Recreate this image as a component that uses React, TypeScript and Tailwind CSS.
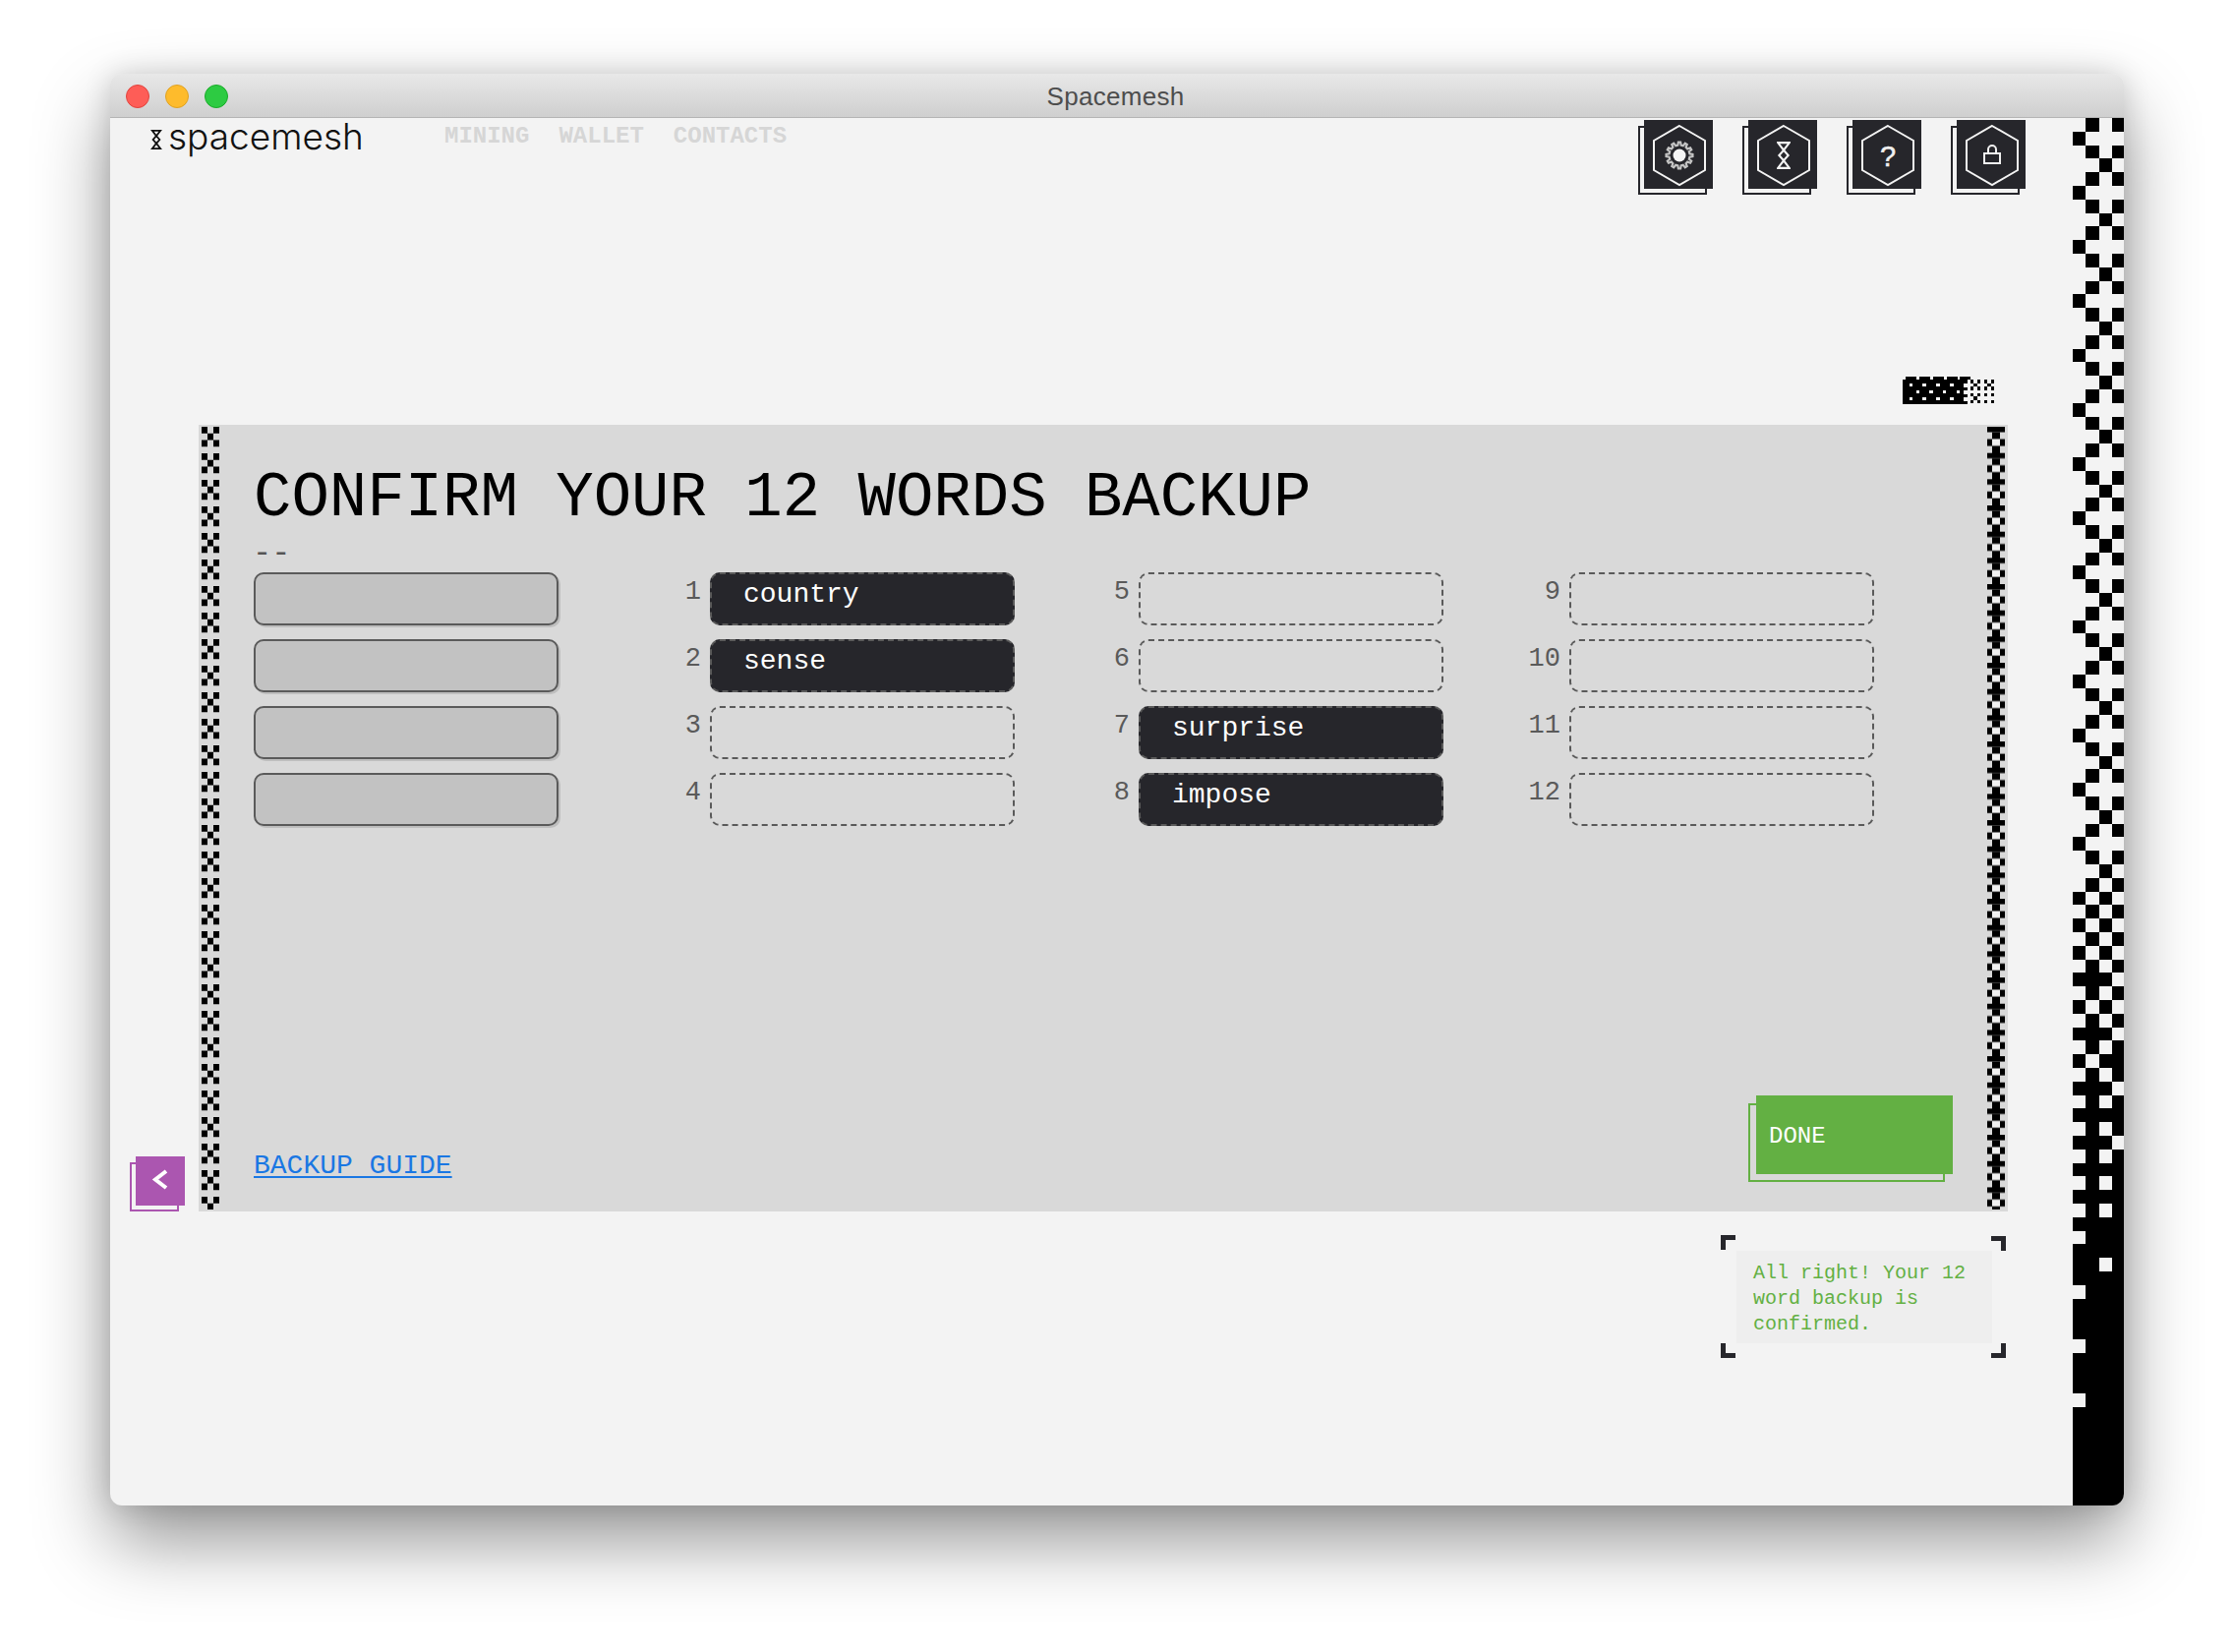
import React from 'react';

const INK = '#26262b';

// right hand strip of the window, one string per row
const stripRows: string[] = [];
for (let i = 0; i < 49; i++) {
  stripRows.push(['0101', '1000', '0101', '0010'][i % 4]);
}
stripRows.push(
  '1000', '0101', '0010', '0101', '1000', '0101', '0010', '0101',
  '1010', '0101', '1010', '0101', '1010', '0101', '1110', '0101',
  '1010', '0101', '1110', '0101', '1011', '0101', '1110', '0101',
  '1111', '0101', '1110', '0101', '1111', '0101', '1111', '0101',
  '1111', '0111', '1111', '1101', '1111', '0111', '1111', '1111', '1111',
  '0111', '1111', '1111', '1111', '0111',
);

const gearPoints = () => {
  const pts: string[] = [];
  const teeth = 12;
  for (let i = 0; i < teeth; i++) {
    const a = (i / teeth) * Math.PI * 2;
    const step = (Math.PI * 2) / teeth;
    [
      [a - step * 0.3, 10.5],
      [a - step * 0.16, 13.5],
      [a + step * 0.16, 13.5],
      [a + step * 0.3, 10.5],
    ].forEach(([t, r]) => {
      pts.push(`${(36 + Math.cos(t) * r).toFixed(2)},${(36 + Math.sin(t) * r).toFixed(2)}`);
    });
  }
  return pts.join(' ');
};

const HexIcon = ({ children }: { children: React.ReactNode }) => (
  <div className="relative w-[70px] h-[70px]">
    <div className="absolute left-[-6px] top-[6px] w-[70px] h-[70px] border-2 border-[#26262b]" />
    <svg className="absolute left-0 top-0" width="70" height="70" viewBox="0 0 70 70">
      <rect width="70" height="70" fill={INK} />
      <polygon points="36,6 62,21 62,51 36,66 10,51 10,21" fill="none" stroke="#f3f3f3" strokeWidth="2" />
      {children}
    </svg>
  </div>
);

const HourglassMark = ({ x, y, w, h, color, sw = 1.8 }: { x: number; y: number; w: number; h: number; color: string; sw?: number }) => (
  <svg x={x} y={y} width={w} height={h} viewBox="0 0 12 24" fill="none" stroke={color} strokeWidth={sw}>
    <path d="M1 1 H11 L6 7.5 Z" />
    <path d="M6 7.5 L10 12 L6 16.5 L2 12 Z" />
    <path d="M1 23 H11 L6 16.5 Z" />
  </svg>
);

const StripLeft = () => (
  <svg className="absolute left-[3px] top-[2px]" width="18" height="796">
    <defs>
      <pattern id="strip-x" width="18" height="27" patternUnits="userSpaceOnUse">
        <rect x="0" y="0" width="6" height="6.75" fill="#000" />
        <rect x="12" y="0" width="6" height="6.75" fill="#000" />
        <rect x="6" y="6.75" width="6" height="6.75" fill="#000" />
        <rect x="0" y="13.5" width="6" height="6.75" fill="#000" />
        <rect x="12" y="13.5" width="6" height="6.75" fill="#000" />
      </pattern>
    </defs>
    <rect width="18" height="796" fill="url(#strip-x)" />
  </svg>
);

const StripRight = () => (
  <svg className="absolute left-[1819px] top-[2px]" width="18" height="796">
    <defs>
      <pattern id="strip-plus" width="18" height="26.67" patternUnits="userSpaceOnUse">
        <rect x="0" y="0" width="18" height="5.5" fill="#000" />
        <rect x="5" y="5.5" width="8" height="7" fill="#000" />
        <rect x="0" y="12.5" width="18" height="7" fill="#000" />
        <rect x="5" y="12.5" width="8" height="7" fill="#f0f0f0" />
        <rect x="5" y="19.5" width="8" height="7.17" fill="#000" />
      </pattern>
    </defs>
    <rect width="18" height="796" fill="url(#strip-plus)" />
  </svg>
);

const Slot = ({ n, word }: { n: number; word?: string }) => (
  <div className="flex h-[54px]">
    <span className="w-[41px] mr-[9px] mt-[7px] text-right text-[27px] leading-none text-[#5a5a5a]">{n}</span>
    <div
      className={
        word
          ? 'w-[310px] h-[54px] rounded-[10px] border-2 border-dashed border-[#5a5a5a] bg-[#26262b] pl-[32px] pt-[7px] text-[28px] leading-none text-white'
          : 'w-[310px] h-[54px] rounded-[10px] border-2 border-dashed border-[#5a5a5a]'
      }
    >
      {word}
    </div>
  </div>
);

const Column = ({ start, words, className }: { start: number; words: Record<number, string>; className: string }) => (
  <div className={`flex flex-col gap-[14px] ${className}`}>
    {[0, 1, 2, 3].map((i) => (
      <Slot key={i} n={start + i} word={words[start + i]} />
    ))}
  </div>
);

const Noise = () => {
  const dots: [number, number][] = [];
  [8.7, 22.3].forEach((y) => [8.3, 22, 36, 50].forEach((x) => dots.push([x, y])));
  [15.3, 29, 42.7, 56.7].forEach((x) => dots.push([x, 15.3]));
  const cross = (x: number, y: number, center: boolean) => (
    <g key={`${x}-${y}`} fill="#000">
      <rect x={x} y={y} width="3.4" height="3.4" />
      <rect x={x + 6.8} y={y} width="3.4" height="3.4" />
      <rect x={x} y={y + 6.8} width="3.4" height="3.4" />
      <rect x={x + 6.8} y={y + 6.8} width="3.4" height="3.4" />
      {center && <rect x={x + 3.4} y={y + 3.4} width="3.4" height="3.4" />}
    </g>
  );
  return (
    <svg width="94" height="28" viewBox="0 0 94 28" shapeRendering="crispEdges">
      <rect x="0" y="3.3" width="66" height="24.4" fill="#000" />
      {[3.3, 17.3, 31, 45, 58.3].map((x) => (
        <rect key={x} x={x} y="0.3" width="10.7" height="3" fill="#000" />
      ))}
      {dots.map(([x, y]) => (
        <rect key={`${x}-${y}`} x={x - 1.75} y={y - 1.75} width="3.5" height="3.5" fill="#f3f3f3" />
      ))}
      <rect x="62" y="7" width="4" height="3.5" fill="#f3f3f3" />
      <rect x="62" y="14" width="4" height="3.5" fill="#f3f3f3" />
      <rect x="62" y="21" width="4" height="3.5" fill="#f3f3f3" />
      {cross(69, 3.3, true)}
      {cross(83, 3.3, true)}
      {cross(69, 17, true)}
      {cross(83, 17, false)}
    </svg>
  );
};

const Corner = ({ className }: { className: string }) => <div className={`absolute w-[15px] h-[15px] border-[#26262b] ${className}`} />;

export default function App() {
  return (
    <div className="min-h-[1680px] bg-white pt-[75px] pl-[112px] font-['Liberation_Mono',monospace]">
      <div className="w-[2048px] h-[1456px] rounded-[12px] overflow-hidden bg-[#f3f3f3] shadow-[0_36px_76px_rgba(0,0,0,0.42),0_0_28px_rgba(0,0,0,0.14)]">
        {/* title bar */}
        <div className="relative h-[45px] pt-[2px] pr-[3px] flex items-center justify-center bg-gradient-to-b from-[#e8e8e8] to-[#cfcfcf] border-b border-[#b4b4b4]">
          <div className="absolute left-[16px] top-[11px] flex gap-[16px]">
            <span className="w-[24px] h-[24px] rounded-full bg-[#fe5d57] border border-[#e0443e]" />
            <span className="w-[24px] h-[24px] rounded-full bg-[#febb2c] border border-[#dea123]" />
            <span className="w-[24px] h-[24px] rounded-full bg-[#2dcb42] border border-[#1aab29]" />
          </div>
          <span className="font-['Liberation_Sans',sans-serif] text-[26px] leading-none tracking-[0.3px] text-[#4d4d4d]">Spacemesh</span>
        </div>

        <div className="flex h-[1411px]">
          <div className="w-[1996px]">
            {/* header */}
            <div className="flex h-[263px] pl-[41px] pr-[48px] pt-[2px] items-start">
              <svg className="mt-[10px]" width="12" height="20" viewBox="0 0 12 20">
                <HourglassMark x={0} y={0} w={12} h={20} color="#111" sw={2.2} />
              </svg>
              <span className="ml-[6px] -mt-[6px] w-[281px] font-['Inter',sans-serif] font-light text-[37px] leading-[46px] text-[#111]">spacemesh</span>
              <nav className="flex gap-[30px] pt-[5px] text-[24px] leading-[24px] font-bold text-[#d6d6d6]">
                <span>MINING</span>
                <span>WALLET</span>
                <span>CONTACTS</span>
              </nav>
              <div className="ml-auto flex gap-[36px]">
                <HexIcon>
                  <polygon points={gearPoints()} fill="none" stroke="#c4c4c4" strokeWidth="2.2" />
                  <circle cx="36" cy="36" r="6.5" fill="#f5f5f5" />
                </HexIcon>
                <HexIcon>
                  <HourglassMark x={29} y={22} w={14} h={28} color="#f3f3f3" />
                </HexIcon>
                <HexIcon>
                  <text x="36" y="47" textAnchor="middle" fontFamily="Liberation Sans, sans-serif" fontSize="29" stroke="#f0f0f0" strokeWidth="0.5" fill="#f0f0f0">?</text>
                </HexIcon>
                <HexIcon>
                  <rect x="28" y="34" width="16" height="10" fill="none" stroke="#f0f0f0" strokeWidth="2" />
                  <path d="M32 34 V30 a4 4 0 0 1 8 0 V34" fill="none" stroke="#f0f0f0" strokeWidth="2" />
                </HexIcon>
              </div>
            </div>
            <div className="h-[49px] pl-[1823px]">
              <Noise />
            </div>

            {/* panel */}
            <div className="relative ml-[90px] w-[1840px] h-[800px] bg-[#d9d9d9] pl-[56px] flex flex-col">
              <StripLeft />
              <StripRight />
              <h1 className="mt-[43px] text-[64px] leading-none font-normal text-black whitespace-pre">CONFIRM YOUR 12 WORDS BACKUP</h1>
              <div className="mt-[8px] -ml-[1px] text-[32px] leading-none text-[#555]">--</div>
              <div className="mt-[3px] flex">
                <div className="flex flex-col gap-[14px] w-[310px]">
                  {[0, 1, 2, 3].map((i) => (
                    <div key={i} className="h-[54px] rounded-[10px] border-2 border-[#5a5a5a] bg-[#c2c2c2] shadow-[2px_2px_0_rgba(0,0,0,0.12)]" />
                  ))}
                </div>
                <Column start={1} words={{ 1: 'country', 2: 'sense' }} className="ml-[104px]" />
                <Column start={5} words={{ 7: 'surprise', 8: 'impose' }} className="ml-[76px]" />
                <Column start={9} words={{}} className="ml-[78px]" />
              </div>
              <div className="mt-auto h-[118px] pr-[56px] flex justify-between items-start">
                <a className="mt-[58px] text-[28px] leading-none text-[#1a77e3] underline decoration-2 underline-offset-[3px]">BACKUP GUIDE</a>
                <div className="relative w-[200px] h-[80px]">
                  <div className="absolute left-[-8px] top-[8px] w-[200px] h-[80px] border-2 border-[#63b043]" />
                  <div className="absolute inset-0 bg-[#63b043] pl-[13px] pt-[30px] text-[24px] leading-none text-white">DONE</div>
                </div>
              </div>
              {/* back button */}
              <div className="absolute left-[-64px] top-[744px] w-[50px] h-[50px]">
                <div className="absolute left-[-6px] top-[6px] w-[50px] h-[50px] border-2 border-[#ab56b0]" />
                <svg className="absolute inset-0" width="50" height="50" viewBox="0 0 50 50">
                  <rect width="50" height="50" fill="#ab56b0" />
                  <path d="M31 15 L20 23.5 L31 32" fill="none" stroke="#fff" strokeWidth="4" />
                </svg>
              </div>
            </div>

            {/* message */}
            <div className="relative mt-[40px] ml-[1654px] w-[260px] h-[94px] bg-[#eeeeee] pl-[17px] pt-[10px] text-[20px] leading-[26px] text-[#63b043]">
              <Corner className="left-[-16px] top-[-16px] border-l-[5px] border-t-[5px]" />
              <Corner className="right-[-14px] top-[-15px] border-r-[5px] border-t-[5px]" />
              <Corner className="left-[-16px] bottom-[-15px] border-l-[5px] border-b-[5px]" />
              <Corner className="right-[-14px] bottom-[-15px] border-r-[5px] border-b-[5px]" />
              All right! Your 12
              <br />
              word backup is
              <br />
              confirmed.
            </div>
          </div>

          {/* checker strip */}
          <svg className="w-[52px] h-[1411px]" width="52" height="1411" viewBox="0 0 52 1411" shapeRendering="crispEdges">
            {Array.from({ length: 103 }).map((_, i) =>
              (stripRows[i] ?? '1111').split('').map((c, j) =>
                c === '1' ? <rect key={`${i}-${j}`} x={j * 13.25} y={i * 13.8} width="13.25" height="13.8" fill="#000" /> : null,
              ),
            )}
          </svg>
        </div>
      </div>
    </div>
  );
}
